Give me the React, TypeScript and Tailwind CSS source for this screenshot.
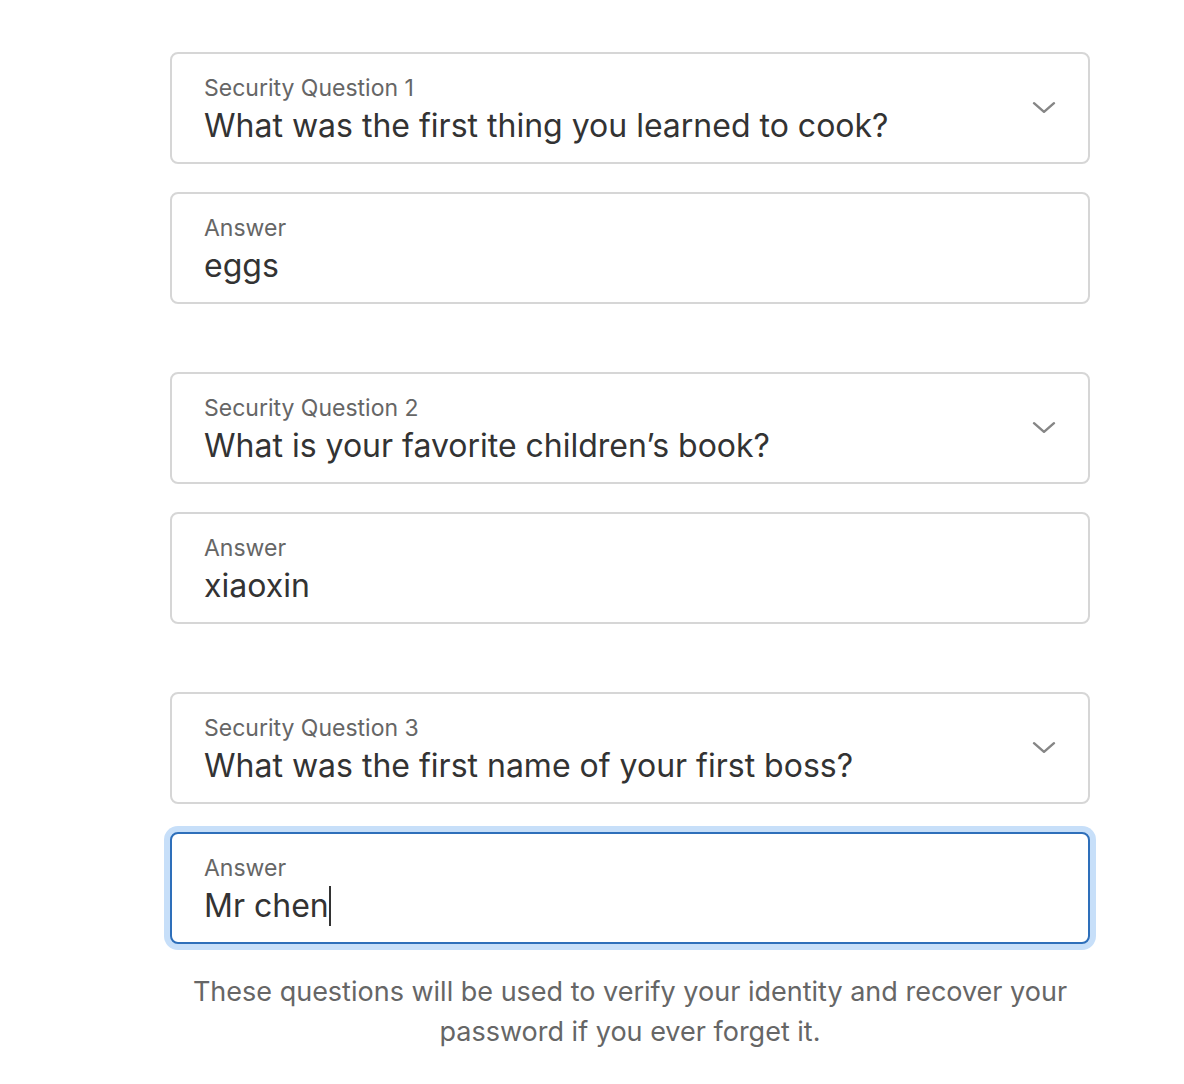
import { useEffect, useRef, useState } from "react";

const groups = [
  { id: 1, question: "What was the first thing you learned to cook?", answer: "eggs" },
  { id: 2, question: "What is your favorite children’s book?", answer: "xiaoxin" },
  { id: 3, question: "What was the first name of your first boss?", answer: "Mr chen" },
];

const box = "relative h-28 rounded-lg border-2 border-[#d6d6d6] bg-white px-8 pt-5";
const label = "block text-[23px] leading-7 text-[#666]";
const field = "block h-12 w-full appearance-none bg-transparent p-0 text-[32px] leading-12 text-[#333] outline-none";

function QuestionSelect({ id, question }: { id: number; question: string }) {
  return (
    <div className={box}>
      <label htmlFor={`q${id}`} className={label}>Security Question {id}</label>
      <select id={`q${id}`} defaultValue={question} className={field}>
        <option>{question}</option>
      </select>
      <svg
        viewBox="0 0 24 14"
        className="pointer-events-none absolute top-[46px] right-8 h-3.5 w-6"
        fill="none"
        stroke="#868686"
        strokeWidth="2.4"
        strokeLinecap="round"
        strokeLinejoin="round"
      >
        <path d="M2 3.2 12 11.8 22 3.2" />
      </svg>
    </div>
  );
}

function AnswerField({ id, answer, autoFocus }: { id: number; answer: string; autoFocus: boolean }) {
  const input = useRef<HTMLInputElement>(null);
  const [caret, setCaret] = useState<number | null>(null);

  // Places the two-pixel caret after the text that precedes the selection.
  const placeCaret = () => {
    const el = input.current;
    const ctx = document.createElement("canvas").getContext("2d");
    if (!el || !ctx) return;
    ctx.font = getComputedStyle(el).font;
    const before = el.value.slice(0, el.selectionStart ?? el.value.length);
    setCaret(Math.round(ctx.measureText(before).width - el.scrollLeft));
  };

  useEffect(() => {
    const el = input.current;
    if (!autoFocus || !el) return;
    el.focus({ preventScroll: true });
    el.setSelectionRange(el.value.length, el.value.length);
    placeCaret();
  }, [autoFocus]);

  return (
    <div className={`${box} focus-within:border-[#2e6fba] focus-within:ring-6 focus-within:ring-[#c7dff9]`}>
      <label htmlFor={`a${id}`} className={label}>Answer</label>
      <div className="relative">
        <input
          id={`a${id}`}
          ref={input}
          type="text"
          defaultValue={answer}
          onSelect={placeCaret}
          onInput={placeCaret}
          onFocus={placeCaret}
          onBlur={() => setCaret(null)}
          className={`${field} caret-transparent`}
        />
        {caret !== null && (
          <span aria-hidden="true" className="pointer-events-none absolute top-1 h-10 w-0.5 bg-[#333]" style={{ left: caret }} />
        )}
      </div>
    </div>
  );
}

export default function App() {
  return (
    <main className="bg-white pt-[52px] pr-[94px] pl-[170px] font-['Inter',sans-serif]">
      <form className="flex flex-col gap-[68px]">
        {groups.map((g) => (
          <div key={g.id} className="flex flex-col gap-7">
            <QuestionSelect id={g.id} question={g.question} />
            <AnswerField id={g.id} answer={g.answer} autoFocus={g.id === 3} />
          </div>
        ))}
      </form>
      <p className="mt-7 px-4 text-center text-[27px] leading-10 text-[#666]">
        These questions will be used to verify your identity and recover your password if you ever forget it.
      </p>
    </main>
  );
}
